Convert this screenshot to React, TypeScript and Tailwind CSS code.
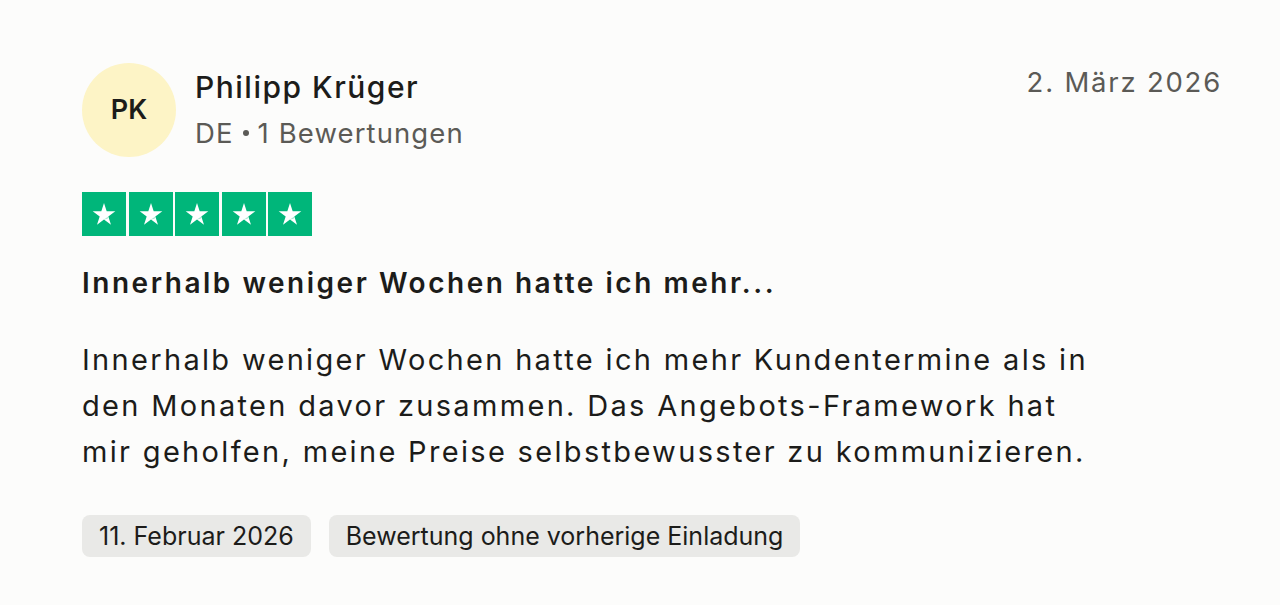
import React from "react";

function Star() {
  return (
    <div className="flex h-[44px] w-[44px] items-center justify-center bg-[#00b67a]">
      <svg viewBox="0 0 24 24" className="h-[28px] w-[28px]">
        <path
          d="M12 2.6l2.3 7.1h7.4l-6 4.4 2.3 7.1L12 16.8l-6 4.4 2.3-7.1-6-4.4h7.4z"
          fill="#ffffff"
        />
        <path d="M15.7 14.1l-3.7 2.7 3.1-0.8z" fill="#00b67a" opacity="0.35" />
      </svg>
    </div>
  );
}

export default function App() {
  return (
    <div
      className="min-h-[605px] bg-[#fcfcfb] pl-[82px] pr-[58px] pt-[63px] text-[#1c1c1a]"
      style={{ fontFamily: "Inter, 'Noto Sans', sans-serif" }}
    >
      <div className="flex items-start justify-between">
        <div className="flex items-center gap-[19px]">
          <div className="flex h-[94px] w-[94px] items-center justify-center rounded-full bg-[#fdf4c6] text-[27px] font-semibold">
            PK
          </div>
          <div className="flex flex-col">
            <span className="text-[30px] font-medium leading-[46px] tracking-[0.05em]">
              Philipp Krüger
            </span>
            <span className="flex items-center text-[27.5px] leading-[46px] tracking-[0.04em] text-[#5b5a56]">
              DE
              <span className="mx-[9px] inline-block h-[6px] w-[6px] rounded-full bg-[#5b5a56]" />
              1 Bewertungen
            </span>
          </div>
        </div>
        <span className="text-[27.5px] leading-[38px] tracking-[0.065em] text-[#5b5a56]">
          2. März 2026
        </span>
      </div>

      <div className="mt-[35px] flex gap-[2.5px]">
        <Star />
        <Star />
        <Star />
        <Star />
        <Star />
      </div>

      <h2 className="mt-[27px] text-[28px] font-semibold leading-[40px] tracking-[0.09em]">
        Innerhalb weniger Wochen hatte ich mehr...
      </h2>

      <p className="mt-[34px] max-w-[1020px] text-[29px] leading-[46px] tracking-[0.08em]">
        Innerhalb weniger Wochen hatte ich mehr Kundentermine als in den Monaten davor zusammen. Das
        Angebots-Framework hat mir geholfen, meine Preise selbstbewusster zu kommunizieren.
      </p>

      <div className="mt-[40px] flex gap-[18px]">
        <span className="rounded-[8px] bg-[#e9e9e7] px-[17px] py-[4px] text-[25px] leading-[34px]">
          11. Februar 2026
        </span>
        <span className="rounded-[8px] bg-[#e9e9e7] px-[17px] py-[4px] text-[25px] leading-[34px]">
          Bewertung ohne vorherige Einladung
        </span>
      </div>
    </div>
  );
}
